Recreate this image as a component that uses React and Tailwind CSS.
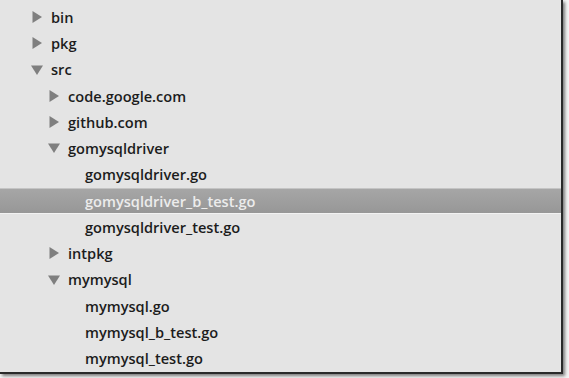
import React from 'react';

const tree = [
  { name: 'bin', depth: 0, type: 'closed' },
  { name: 'pkg', depth: 0, type: 'closed' },
  { name: 'src', depth: 0, type: 'open' },
  { name: 'code.google.com', depth: 1, type: 'closed' },
  { name: 'github.com', depth: 1, type: 'closed' },
  { name: 'gomysqldriver', depth: 1, type: 'open' },
  { name: 'gomysqldriver.go', depth: 2, type: 'file' },
  { name: 'gomysqldriver_b_test.go', depth: 2, type: 'file', selected: true },
  { name: 'gomysqldriver_test.go', depth: 2, type: 'file' },
  { name: 'intpkg', depth: 1, type: 'closed' },
  { name: 'mymysql', depth: 1, type: 'open' },
  { name: 'mymysql.go', depth: 2, type: 'file' },
  { name: 'mymysql_b_test.go', depth: 2, type: 'file' },
  { name: 'mymysql_test.go', depth: 2, type: 'file' },
];

const Arrow = ({ open }) => (
  <svg width="12" height="12" viewBox="0 0 12 12" className="shrink-0">
    {open ? (
      <polygon points="0,1.5 12,1.5 6,11" fill="#7f7f7f" />
    ) : (
      <polygon points="1.5,0 11,6 1.5,12" fill="#7f7f7f" />
    )}
  </svg>
);

const Row = ({ item }) => {
  const pad = { 0: 'pl-[31px]', 1: 'pl-[48px]', 2: 'pl-[85px]' }[item.depth];
  return (
    <div
      className={`flex items-center h-[26.25px] ${pad} ${
        item.selected
          ? 'bg-gradient-to-b from-[#a6a6a6] to-[#979797] border-t border-[#c4c4c4] border-b border-b-[#f2f2f2] text-[#ececec]'
          : 'text-[#1c1c1c]'
      }`}
    >
      {item.type !== 'file' && <Arrow open={item.type === 'open'} />}
      <span className={`${item.type === 'file' ? '' : 'ml-[8px]'} text-[14.6px] font-semibold leading-none`}>
        {item.name}
      </span>
    </div>
  );
};

export default function App() {
  return (
    <div className="w-[569px] h-[378px] bg-[#f4f4f4] overflow-hidden" style={{ fontFamily: '"Open Sans", sans-serif' }}>
      <div className="w-[563px] h-[374px] bg-[#e4e4e4] border-r-2 border-b-2 border-[#2a2a2a] shadow-[2px_2px_3px_rgba(0,0,0,0.5)] pt-[4px]">
        {tree.map((item) => (
          <Row key={item.name} item={item} />
        ))}
      </div>
    </div>
  );
}
